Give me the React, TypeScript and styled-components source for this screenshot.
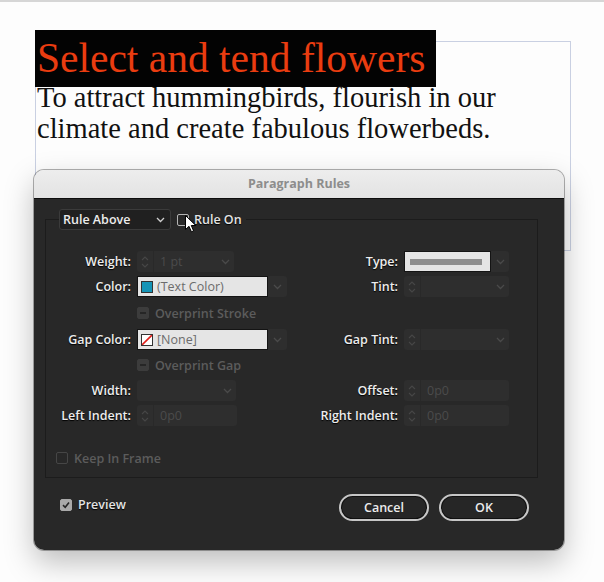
import React from "react";
import styled, { createGlobalStyle } from "styled-components";

const GlobalStyle = createGlobalStyle`
  html, body {
    margin: 0;
    padding: 0;
    background: #fdfdfd;
  }
  body {
    width: 604px;
    height: 582px;
    overflow: hidden;
  }
`;

type BoxKind = "empty" | "disabled" | "mixed" | "checked";

const Page = styled.div`
  position: relative;
  height: 582px;
  box-sizing: border-box;
  border-top: 2px solid #d6d6d6;
  padding: 39px 0 0 35px;
`;

const TextFrame = styled.div`
  width: 536px;
  height: 210px;
  box-sizing: border-box;
  border: 1px solid #c9d0e2;
  font-family: "Liberation Serif", "Times New Roman", serif;
`;

const RuleHeading = styled.h1`
  margin: -12px 0 0 -1px;
  width: 401px;
  height: 57px;
  box-sizing: border-box;
  padding-left: 2px;
  background: #030303;
  color: #ea3c10;
  font-size: 41.5px;
  font-weight: normal;
  line-height: 57px;
  white-space: nowrap;
`;

const BodyCopy = styled.p`
  margin: -5px 0 0 0;
  padding-left: 1px;
  color: #111;
  font-size: 28.5px;
  line-height: 31px;
`;

const Dialog = styled.div`
  position: absolute;
  left: 34px;
  top: 168px;
  width: 530px;
  border-radius: 10px;
  overflow: hidden;
  box-shadow: 0 12px 30px rgba(0, 0, 0, 0.26), 0 0 0 1px rgba(0, 0, 0, 0.3);
  font-family: "Open Sans", "DejaVu Sans", sans-serif;
`;

const TitleBar = styled.div`
  height: 28px;
  border-bottom: 1px solid #0d0d0d;
  background: linear-gradient(#ededed, #e3e3e3);
  color: #8d8d8d;
  font-size: 12.5px;
  font-weight: 700;
  line-height: 28px;
  text-align: center;
`;

const DialogBody = styled.div`
  background: #282828;
  padding: 10px 26px 0 11px;
`;

const Panel = styled.fieldset`
  margin: 0;
  min-width: 0;
  padding: 0 0 9px 0;
  border: 1px solid #1c1c1c;
`;

const PanelLegend = styled.legend`
  display: flex;
  align-items: center;
  margin-left: 13px;
  padding: 0;
`;

const RuleSelect = styled.div`
  display: flex;
  align-items: center;
  justify-content: space-between;
  width: 112px;
  height: 21px;
  box-sizing: border-box;
  padding: 0 5px 0 3px;
  border: 1px solid #3b3b3b;
  border-radius: 3px;
  background: #202020;
  color: #ececec;
  font-size: 12.5px;
  font-weight: 600;
`;

const CheckRow = styled.label<{ $dim?: boolean }>`
  position: relative;
  display: flex;
  align-items: center;
  gap: 6px;
  color: ${({ $dim }) => ($dim ? "#5c5c5c" : "#e4e4e4")};
  font-size: 12.5px;
  font-weight: 600;
  text-shadow: ${({ $dim }) => ($dim ? "none" : "0 1px 1px #000")};
  white-space: nowrap;
`;

const LegendCheck = styled(CheckRow)`
  margin-left: 6px;
  gap: 5px;
  padding-right: 4px;
`;

const PreviewCheck = styled(CheckRow)`
  margin-bottom: 6px;
`;

const Box = styled.span<{ $kind: BoxKind }>`
  display: flex;
  align-items: center;
  justify-content: center;
  width: 12px;
  height: 12px;
  box-sizing: border-box;
  border-radius: 2px;
  border: 1px solid
    ${({ $kind }) =>
      $kind === "empty" ? "#b4b4b4" : $kind === "disabled" ? "#464646" : $kind === "mixed" ? "#3c3c3c" : "#a9a9a9"};
  background: ${({ $kind }) =>
    $kind === "mixed" ? "#3c3c3c" : $kind === "checked" ? "#a9a9a9" : "transparent"};
`;

const Dash = styled.span`
  width: 6px;
  height: 2px;
  background: #262626;
`;

const Cursor = styled.svg`
  position: absolute;
  left: 8px;
  top: 4px;
`;

const Grid = styled.div`
  display: grid;
  grid-template-columns: 85px 154px 101px 105px;
  grid-template-rows: 21px 21px 24px 21px 22px 21px 21px;
  column-gap: 6px;
  row-gap: 4px;
  margin-top: 21px;
`;

const Label = styled.span`
  align-self: center;
  color: #ededed;
  font-size: 12.5px;
  font-weight: 600;
  text-align: right;
  text-shadow: 0 1px 1px #000;
  white-space: nowrap;
`;

const Cell = styled.div<{ $span?: number }>`
  display: flex;
  align-items: center;
  grid-column: ${({ $span }) => ($span ? `span ${$span}` : "auto")};
`;

const Spacer = styled.div<{ $span: number }>`
  grid-column: span ${({ $span }) => $span};
`;

const DimField = styled.div<{ $width: number }>`
  display: flex;
  align-items: center;
  width: ${({ $width }) => $width}px;
  height: 21px;
  border-radius: 3px;
  background: #2e2e2e;
`;

const Spinner = styled.span`
  display: flex;
  align-items: center;
  justify-content: center;
  width: 16px;
  height: 100%;
  border-right: 1px solid #292929;
`;

const FieldText = styled.span`
  flex: 1;
  padding-left: 6px;
  color: #4b4b4b;
  font-size: 12.5px;
`;

const Caret = styled.span`
  display: flex;
  align-items: center;
  justify-content: center;
  width: 18px;
  height: 100%;
`;

const Combo = styled.div`
  display: flex;
  align-items: center;
`;

const LightBox = styled.div<{ $width: number }>`
  display: flex;
  align-items: center;
  gap: 4px;
  width: ${({ $width }) => $width}px;
  height: 21px;
  box-sizing: border-box;
  padding: 0 3px;
  border: 1px solid #141414;
  background: #e5e5e5;
  color: #6c6c6c;
  font-size: 12.5px;
`;

const ComboCaret = styled.span<{ $width: number }>`
  display: flex;
  align-items: center;
  justify-content: center;
  width: ${({ $width }) => $width}px;
  height: 21px;
  border-radius: 0 3px 3px 0;
  background: #2e2e2e;
`;

const Swatch = styled.span<{ $color: string }>`
  width: 12px;
  height: 12px;
  box-sizing: border-box;
  border: 1px solid #333;
  background: ${({ $color }) => $color};
`;

const LineSample = styled.span`
  flex: 1;
  height: 6px;
  margin: 0 5px 0 2px;
  background: #8e8e8e;
`;

const KeepRow = styled.div`
  display: flex;
  margin: 22px 0 0 10px;
  height: 20px;
`;

const Footer = styled.div`
  display: flex;
  align-items: center;
  padding: 16px 9px 29px 15px;
`;

const ButtonGroup = styled.div`
  display: flex;
  gap: 10px;
  margin-left: auto;
`;

const PillButton = styled.button`
  width: 90px;
  height: 27px;
  border: 2px solid #c6c6c6;
  border-radius: 14px;
  background: #262626;
  box-shadow: inset 0 0 0 1px #101010;
  color: #ececec;
  font-family: inherit;
  font-size: 12.5px;
  font-weight: 600;
  padding: 0;
`;

const ChevronDown = ({ color = "#4a4a4a" }: { color?: string }) => (
  <svg width="9" height="6" viewBox="0 0 9 6">
    <path d="M1 1 L4.5 4.5 L8 1" fill="none" stroke={color} strokeWidth="1.3" />
  </svg>
);

const SpinIcon = () => (
  <svg width="8" height="14" viewBox="0 0 8 14">
    <path d="M1 5 L4 2 L7 5 M1 9 L4 12 L7 9" fill="none" stroke="#474747" strokeWidth="1.1" />
  </svg>
);

const Check = ({ kind, children }: { kind: BoxKind; children?: React.ReactNode }) => (
  <Box $kind={kind}>{children}</Box>
);

const Field = ({ width, spin, caret, text }: { width: number; spin?: boolean; caret?: boolean; text?: string }) => (
  <DimField $width={width}>
    {spin && (
      <Spinner>
        <SpinIcon />
      </Spinner>
    )}
    <FieldText>{text}</FieldText>
    {caret && (
      <Caret>
        <ChevronDown />
      </Caret>
    )}
  </DimField>
);

export default function App() {
  return (
    <>
      <GlobalStyle />
      <Page>
        <TextFrame>
          <RuleHeading>Select and tend flowers</RuleHeading>
          <BodyCopy>
            To attract hummingbirds, flourish in our
            <br />
            climate and create fabulous flowerbeds.
          </BodyCopy>
        </TextFrame>

        <Dialog>
          <TitleBar>Paragraph Rules</TitleBar>
          <DialogBody>
            <Panel>
              <PanelLegend>
                <RuleSelect>
                  Rule Above
                  <ChevronDown color="#cfcfcf" />
                </RuleSelect>
                <LegendCheck>
                  <Check kind="empty" />
                  Rule On
                  <Cursor width="12" height="18" viewBox="0 0 12 18">
                    <path
                      d="M0.5 0.5 L0.5 14.5 L4 11.3 L6.4 16.8 L8.6 15.9 L6.3 10.5 L10.8 10.5 Z"
                      fill="#fff"
                      stroke="#000"
                      strokeWidth="1"
                      strokeLinejoin="round"
                    />
                  </Cursor>
                </LegendCheck>
              </PanelLegend>

              <Grid>
                <Label>Weight:</Label>
                <Cell>
                  <Field width={97} spin caret text="1 pt" />
                </Cell>
                <Label>Type:</Label>
                <Cell>
                  <Combo>
                    <LightBox $width={87}>
                      <LineSample />
                    </LightBox>
                    <ComboCaret $width={18}>
                      <ChevronDown />
                    </ComboCaret>
                  </Combo>
                </Cell>

                <Label>Color:</Label>
                <Cell>
                  <Combo>
                    <LightBox $width={131}>
                      <Swatch $color="#1594b6" />
                      (Text Color)
                    </LightBox>
                    <ComboCaret $width={19}>
                      <ChevronDown />
                    </ComboCaret>
                  </Combo>
                </Cell>
                <Label>Tint:</Label>
                <Cell>
                  <Field width={105} spin caret />
                </Cell>

                <Spacer $span={1} />
                <Cell $span={3}>
                  <CheckRow $dim>
                    <Check kind="mixed">
                      <Dash />
                    </Check>
                    Overprint Stroke
                  </CheckRow>
                </Cell>

                <Label>Gap Color:</Label>
                <Cell>
                  <Combo>
                    <LightBox $width={131}>
                      <Swatch $color="#fff">
                        <svg width="10" height="10" viewBox="0 0 10 10" style={{ display: "block" }}>
                          <path d="M0 10 L10 0" stroke="#e0201b" strokeWidth="1.6" />
                        </svg>
                      </Swatch>
                      [None]
                    </LightBox>
                    <ComboCaret $width={19}>
                      <ChevronDown />
                    </ComboCaret>
                  </Combo>
                </Cell>
                <Label>Gap Tint:</Label>
                <Cell>
                  <Field width={105} spin caret />
                </Cell>

                <Spacer $span={1} />
                <Cell $span={3}>
                  <CheckRow $dim>
                    <Check kind="mixed">
                      <Dash />
                    </Check>
                    Overprint Gap
                  </CheckRow>
                </Cell>

                <Label>Width:</Label>
                <Cell>
                  <Field width={99} caret />
                </Cell>
                <Label>Offset:</Label>
                <Cell>
                  <Field width={105} spin text="0p0" />
                </Cell>

                <Label>Left Indent:</Label>
                <Cell>
                  <Field width={100} spin text="0p0" />
                </Cell>
                <Label>Right Indent:</Label>
                <Cell>
                  <Field width={105} spin text="0p0" />
                </Cell>
              </Grid>

              <KeepRow>
                <CheckRow $dim>
                  <Check kind="disabled" />
                  Keep In Frame
                </CheckRow>
              </KeepRow>
            </Panel>

            <Footer>
              <PreviewCheck>
                <Check kind="checked">
                  <svg width="8" height="8" viewBox="0 0 8 8">
                    <path d="M1 4.2 L3.2 6.3 L7 1.5" fill="none" stroke="#262626" strokeWidth="1.6" />
                  </svg>
                </Check>
                Preview
              </PreviewCheck>
              <ButtonGroup>
                <PillButton>Cancel</PillButton>
                <PillButton>OK</PillButton>
              </ButtonGroup>
            </Footer>
          </DialogBody>
        </Dialog>
      </Page>
    </>
  );
}
